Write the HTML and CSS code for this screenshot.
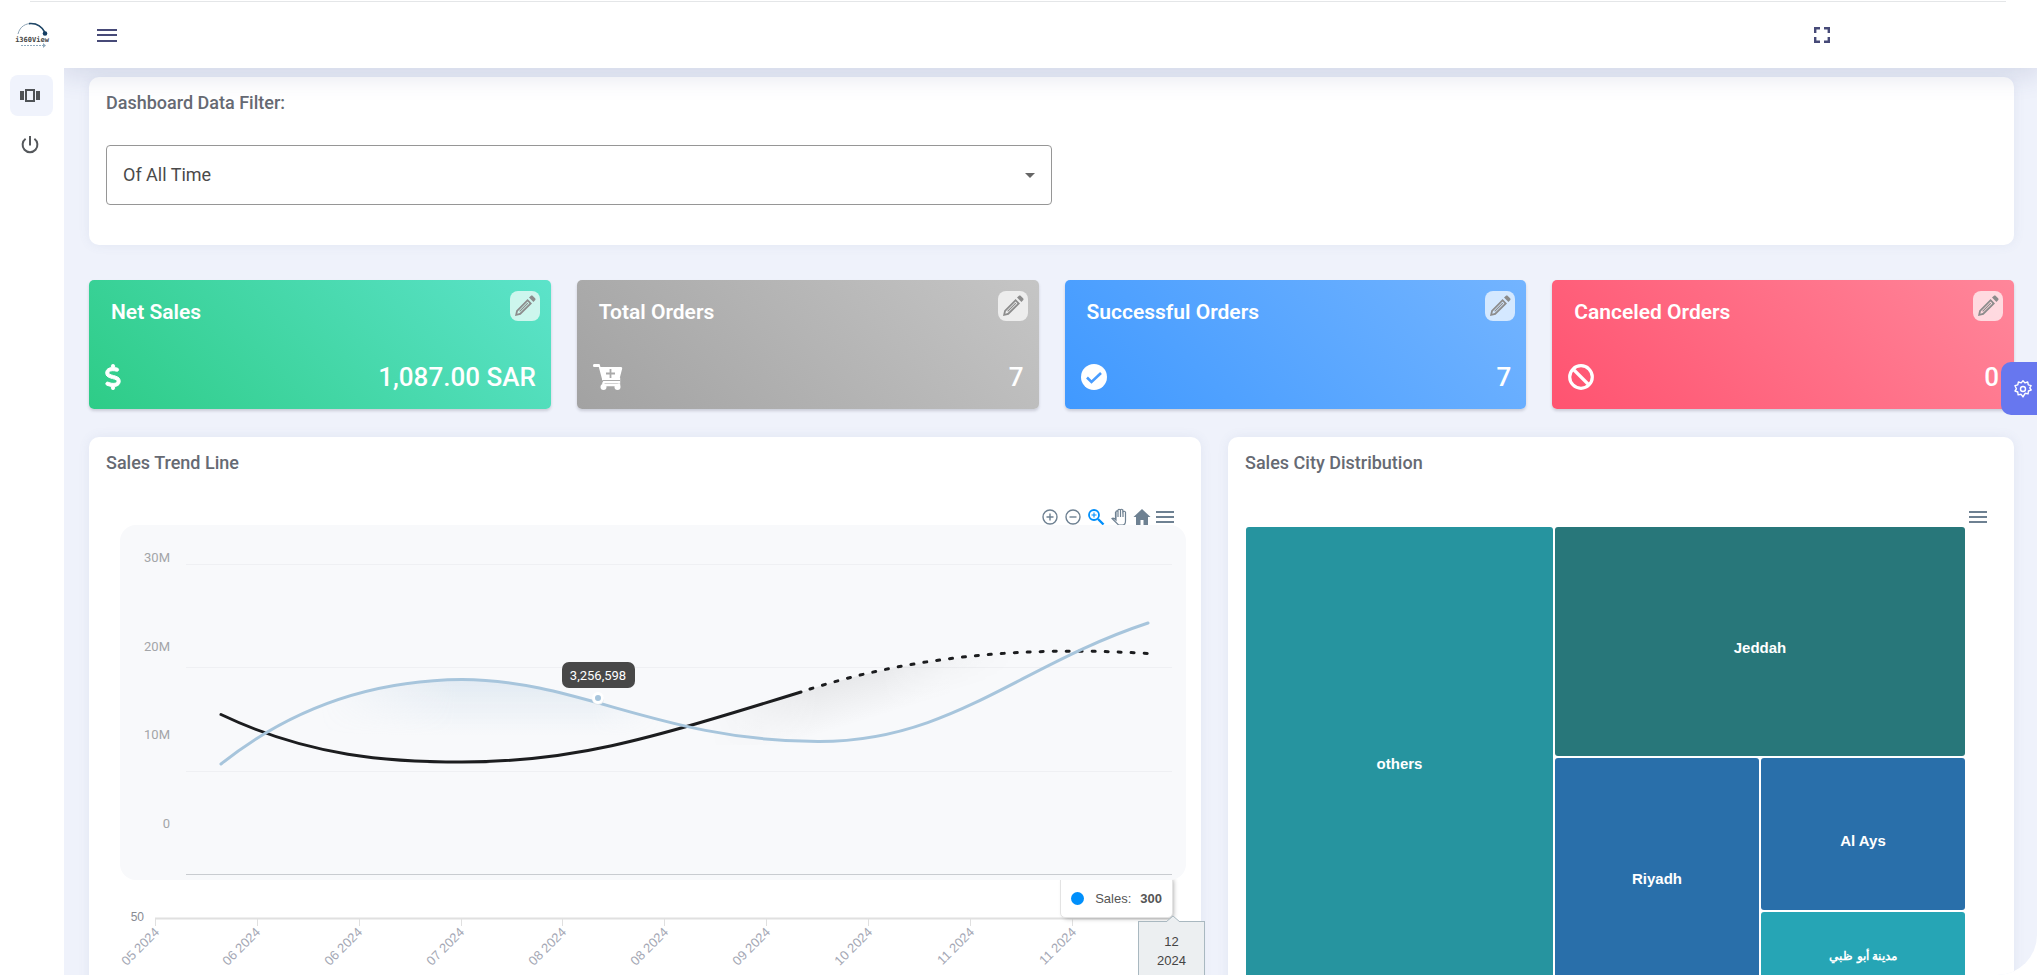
FILE: index.html
```html
<!DOCTYPE html>
<html lang="en">
<head>
<meta charset="utf-8">
<title>Dashboard</title>
<link rel="stylesheet" href="styles.css">
</head>
<body>
<svg class="defs" aria-hidden="true">
  <symbol id="pencil" viewBox="0 0 24 24"><path fill-rule="evenodd" d="M2 22l1.2-5.6L14.6 5l4.4 4.4L7.600 20.800zM4.900 17.300l-.6 2.400 2.400-.6 9.700-9.700-1.800-1.800zM7 17.800l-.8-.8 8.200-8.200.8.8zM16 3.600l1.700-1.700c.6-.6 1.500-.6 2.100 0l2.300 2.300c.6.6.6 1.500 0 2.100L20.400 8z"/></symbol>
  <symbol id="bars" viewBox="0 0 18 14"><path d="M0 1h18v2H0zM0 6h18v2H0zM0 11h18v2H0z"/></symbol>
</svg>
<div class="app">
  <aside class="sidebar">
    <a class="logo" href="#" aria-label="i360View">
      <svg viewBox="0 0 36 26" width="36" height="26">
        <path d="M3 12C5 4 11 1.500 16.500 1.500c6 0 11 3.500 13.500 9" fill="none" stroke="#8ca3b5" stroke-width="1"/>
        <path d="M14 1.600c7-.6 13 3 16 9" fill="none" stroke="#1f4666" stroke-width="1.600"/>
        <circle cx="30" cy="11.500" r="2.300" fill="#153e63"/>
        <path d="M6 23.500h22" stroke="#8fa9bd" stroke-dasharray="2 1"/>
        <path d="M28 21l3 2.500-3 2.500z" fill="#8fa9bd"/>
        <text x="17" y="20" class="logo-text">i360View</text>
      </svg>
    </a>
    <nav class="nav">
      <a class="nav-item active" href="#" aria-label="Dashboard">
        <svg viewBox="0 0 20 14" width="20" height="14"><path fill="#4f5256" fill-rule="evenodd" d="M0 2h4v9H0zM16 2h4v9h-4zM5 0h10v13H5zM7 2v9h6V2z"/></svg>
      </a>
      <a class="nav-item" href="#" aria-label="Log out">
        <svg viewBox="0 0 18 18" width="18" height="18" fill="none" stroke="#55585c" stroke-width="2"><path d="M9 0v9.500M4.600 2.800a7.400 7.400 0 1 0 8.800 0"/></svg>
      </a>
    </nav>
  </aside>
  <div class="page">
    <header class="header">
      <button class="icon-button" aria-label="Toggle menu"><svg viewBox="0 0 20 14" width="20" height="14" fill="#474a78"><path d="M0 1h20v2H0zM0 6h20v2H0zM0 12h20v2H0z"/></svg></button>
      <button class="icon-button" aria-label="Full screen"><svg viewBox="0 0 16 16" width="16" height="16" fill="none" stroke="#474a78" stroke-width="2.400"><path d="M1.200 6V1.200H6M10 1.200h4.800V6M14.800 10v4.800H10M6 14.800H1.200V10"/></svg></button>
    </header>
    <main class="main">
      <section class="card">
        <label class="card-title" for="period">Dashboard Data Filter:</label>
        <div class="select-wrap">
          <select id="period" class="select"><option>Of All Time</option></select>
          <svg class="caret" viewBox="0 0 10 5" width="10" height="5"><path d="M0 0h10L5 5z" fill="#666"/></svg>
        </div>
      </section>

      <section class="stats">
        <article class="stat green">
          <div class="stat-row"><h2 class="stat-title">Net Sales</h2><button class="edit" aria-label="Edit"><svg width="24" height="24"><use href="#pencil"/></svg></button></div>
          <div class="stat-row"><svg viewBox="0 0 320 512" width="16" height="26" fill="#fff" stroke="#fff" stroke-width="20"><path d="M160 0c17.700 0 32 14.300 32 32v35.700c1.600.2 3.100.4 4.700.7.400.1.700.1 1.100.2l48 8.800c17.400 3.200 28.900 19.900 25.700 37.200s-19.900 28.900-37.200 25.700l-47.500-8.700c-31.300-4.600-58.900-1.500-78.300 6.200s-27.200 18.300-29 28.100c-2 10.700-.5 16.700 1.200 20.400 1.800 3.900 5.500 8.300 12.800 13.200 16.300 10.700 41.300 17.700 73.700 26.300l2.900.8c28.600 7.600 63.600 16.800 89.600 33.800 14.200 9.300 27.600 21.900 35.900 39.500 8.500 17.900 10.300 37.900 6.400 59.200-6.900 38-33.100 63.400-65.600 76.700-13.700 5.600-28.600 9.200-44.400 11V480c0 17.700-14.300 32-32 32s-32-14.300-32-32v-34.900l-1.200-.2c-24.400-3.800-64.500-14.300-91.500-26.300-16.100-7.200-23.400-26.100-16.200-42.200s26.100-23.400 42.200-16.200c20.900 9.300 55.300 18.500 75.200 21.600 31.900 4.700 58.200 2 76-5.300 16.900-6.900 24.600-16.900 26.800-28.900 1.900-10.600.4-16.700-1.300-20.400-1.900-4-5.600-8.400-13-13.300-16.400-10.700-41.500-17.700-74-26.300l-2.800-.7c-28.700-7.600-63.700-16.900-89.700-33.900-14.200-9.300-27.500-22-35.800-39.600-8.400-17.900-10.100-37.900-6.100-59.200C23.700 116 52.300 91.200 84.800 78.300 98.100 73 112.800 69.300 128 67.200V32c0-17.700 14.300-32 32-32z"/></svg><span class="stat-value">1,087.00 SAR</span></div>
        </article>
        <article class="stat gray">
          <div class="stat-row"><h2 class="stat-title">Total Orders</h2><button class="edit" aria-label="Edit"><svg width="24" height="24"><use href="#pencil"/></svg></button></div>
          <div class="stat-row"><svg viewBox="0 0 30 26" width="30" height="26"><path d="M1 0h5.500l1 3H28q1.500 0 1.200 1.500L26.500 15H9L5.800 3H1Q0 3 0 1.500T1 0z" fill="#fff"/><path d="M9 15h17v3H11q-1 1-.5 3H26v-1.500" fill="none" stroke="#fff" stroke-width="2.400"/><path d="M10 16.500h17" stroke="#ababab"/><circle cx="10.500" cy="23" r="3" fill="#fff"/><circle cx="24.500" cy="23" r="3" fill="#fff"/><path d="M17.500 5v9M13 9.500h9" stroke="#aaa" stroke-width="1.800"/></svg><span class="stat-value">7</span></div>
        </article>
        <article class="stat blue">
          <div class="stat-row"><h2 class="stat-title">Successful Orders</h2><button class="edit" aria-label="Edit"><svg width="24" height="24"><use href="#pencil"/></svg></button></div>
          <div class="stat-row"><svg viewBox="0 0 26 26" width="26" height="26"><circle cx="13" cy="13" r="13" fill="#fff"/><path d="M6 13.500l4.500 4.500L20 9" fill="none" stroke="#489cff" stroke-width="2.600"/></svg><span class="stat-value">7</span></div>
        </article>
        <article class="stat red">
          <div class="stat-row"><h2 class="stat-title">Canceled Orders</h2><button class="edit" aria-label="Edit"><svg width="24" height="24"><use href="#pencil"/></svg></button></div>
          <div class="stat-row"><svg viewBox="0 0 26 26" width="26" height="26" fill="none" stroke="#fff" stroke-width="3.200"><circle cx="13" cy="13" r="11.300"/><path d="M5 5l16 16"/></svg><span class="stat-value">0</span></div>
        </article>
      </section>

      <section class="charts">
        <article class="card">
          <h2 class="card-title">Sales Trend Line</h2>
          <div class="toolbar">
            <button class="tool" aria-label="Zoom in"><svg viewBox="0 0 18 18" width="18" height="18" fill="none" stroke="#6e8192" stroke-width="1.400"><circle cx="9" cy="9" r="7"/><path d="M9 5.500v7M5.500 9h7"/></svg></button>
            <button class="tool" aria-label="Zoom out"><svg viewBox="0 0 18 18" width="18" height="18" fill="none" stroke="#6e8192" stroke-width="1.400"><circle cx="9" cy="9" r="7"/><path d="M5.500 9h7"/></svg></button>
            <button class="tool" aria-label="Selection zoom"><svg viewBox="0 0 18 18" width="18" height="18" fill="none" stroke="#008ffb"><circle cx="7" cy="7" r="5" stroke-width="1.800"/><path d="M11 11l5.500 5.500" stroke-width="2.400"/><path d="M7 4.500v5M4.500 7h5" stroke-width="1.100"/></svg></button>
            <button class="tool" aria-label="Pan"><svg viewBox="0 0 18 18" width="18" height="18" fill="none" stroke="#6e8192" stroke-width="1.200"><path d="M5.500 11V4M8 9V2M10.500 9V1.500M13 9V2.500M15.500 4v9q0 4-3 4H8.500L2 10.500q1.500-1.200 4 1.500V3.500q1-1.200 2 0V2q1-1.500 2.200 0 1.300-1.500 2.600 0v2q1.500-1.500 2.700 0"/></svg></button>
            <button class="tool" aria-label="Reset zoom"><svg viewBox="0 0 18 18" width="18" height="18" fill="#6e8192"><path d="M9 1l8.500 8H15v8h-4.500v-5h-3v5H3V9H.500z"/></svg></button>
            <button class="tool" aria-label="Menu"><svg width="18" height="14" fill="#6e8192"><use href="#bars"/></svg></button>
          </div>
          <svg class="trend" viewBox="0 0 1066 355" role="img" aria-label="Sales trend">
            <defs>
              <linearGradient id="blueFill" x1="0" y1="154" x2="0" y2="210" gradientUnits="userSpaceOnUse"><stop stop-color="#a5c3dc" stop-opacity=".26"/><stop offset="1" stop-color="#a5c3dc" stop-opacity="0"/></linearGradient>
              <linearGradient id="blackFill" x1="740" y1="140" x2="756" y2="192" gradientUnits="userSpaceOnUse"><stop stop-color="#222" stop-opacity=".09"/><stop offset="1" stop-color="#222" stop-opacity="0"/></linearGradient>
              <linearGradient id="fade" x1="200" x2="540" gradientUnits="userSpaceOnUse"><stop stop-color="#000"/><stop offset=".4" stop-color="#fff"/><stop offset=".8" stop-color="#fff"/><stop offset="1" stop-color="#000"/></linearGradient>
              <linearGradient id="fade2" x1="590" x2="900" gradientUnits="userSpaceOnUse"><stop stop-color="#000"/><stop offset=".35" stop-color="#fff"/><stop offset=".55" stop-color="#fff"/><stop offset="1" stop-color="#000"/></linearGradient>
              <mask id="m1"><rect width="1066" height="355" fill="url(#fade)"/></mask>
              <mask id="m2"><rect width="1066" height="355" fill="url(#fade2)"/></mask>
            </defs>
            <rect width="1066" height="355" rx="16" fill="#f8f9fb"/>
            <path d="M66 39.500h986M66 142.500h986M66 246.500h986" stroke="#eff0f3"/>
            <path d="M66 349.500h986" stroke="#c9ccd0"/>
            <g class="axis-text" text-anchor="end"><text x="50" y="37">30M</text><text x="50" y="126">20M</text><text x="50" y="214">10M</text><text x="50" y="303">0</text></g>
            <path mask="url(#m1)" d="M101 239C190 168 280 155 342 154.500C460 155 540 216 698 216.500z" fill="url(#blueFill)"/>
            <path mask="url(#m2)" d="M575 201L681 167C790 132 905 121 1028 128.500L960 220H575z" fill="url(#blackFill)"/>
            <g fill="none" stroke-width="3" stroke-linecap="round">
              <path d="M101 189.500C190 232 270 237 342 237C450 237 520 217 681 167" stroke="#1c1d1f"/>
              <path d="M690 164C795 131 905 121 1028 128.500" stroke="#1c1d1f" stroke-dasharray="3 10"/>
              <path d="M101 239C190 168 280 155 342 154.500C460 155 540 216 698 216.500C830 217 900 140 1028 98" stroke="#a7c5dc"/>
            </g>
            <circle cx="478" cy="174" r="6" fill="#dfe6ec"/><circle cx="478" cy="173" r="4.500" fill="#a7c5dc" stroke="#fff" stroke-width="3"/>
            <rect x="442" y="137" width="73" height="26" rx="7" fill="#484848"/>
            <text x="478" y="155" text-anchor="middle" class="point-text">3,256,598</text>
          </svg>
          <div class="axis">
            <svg class="axis-svg" viewBox="0 0 1112 120" role="img" aria-label="Months">
              <path d="M66 38.500h1018" stroke="#e0e0e0" stroke-width="2"/>
              <path d="M66.500 39v7M168.500 39v7M270.500 39v7M372.500 39v7M473.500 39v7M575.500 39v7M677.500 39v7M779.500 39v7M881.500 39v7M983.500 39v7" stroke="#e0e0e0"/>
              <text x="55" y="41" class="axis-label" text-anchor="end">50</text>
              <g class="months" text-anchor="end">
                <text transform="translate(71 53) rotate(-45)">05 2024</text>
                <text transform="translate(172 53) rotate(-45)">06 2024</text>
                <text transform="translate(274 53) rotate(-45)">06 2024</text>
                <text transform="translate(376 53) rotate(-45)">07 2024</text>
                <text transform="translate(478 53) rotate(-45)">08 2024</text>
                <text transform="translate(580 53) rotate(-45)">08 2024</text>
                <text transform="translate(682 53) rotate(-45)">09 2024</text>
                <text transform="translate(784 53) rotate(-45)">10 2024</text>
                <text transform="translate(886 53) rotate(-45)">11 2024</text>
                <text transform="translate(988 53) rotate(-45)">11 2024</text>
              </g>
            </svg>
            <div class="tip"><span class="dot"></span><span>Sales:</span><b>300</b></div>
            <div class="x-tip"><svg class="x-arrow" viewBox="0 0 14 7" width="14" height="7"><path d="M0 7l7-6 7 6" fill="#eceff1" stroke="#a9b8c0"/></svg>12<br>2024</div>
          </div>
        </article>

        <article class="card">
          <h2 class="card-title">Sales City Distribution</h2>
          <div class="toolbar"><button class="tool" aria-label="Menu"><svg width="18" height="14" fill="#6e8192"><use href="#bars"/></svg></button></div>
          <div class="treemap">
            <div class="cell others">others</div>
            <div class="cell jeddah">Jeddah</div>
            <div class="cell riyadh">Riyadh</div>
            <div class="cell ays">Al Ays</div>
            <div class="cell dhabi" lang="ar" dir="rtl">مدينة أبو ظبي</div>
          </div>
        </article>
      </section>
    </main>
  </div>
  <button class="settings" aria-label="Settings">
    <svg viewBox="0 0 18 18" width="18" height="18" fill="none" stroke="#fff" stroke-width="1.400" stroke-linejoin="round"><path d="M9 .8l1.900 2.100 2.800-.9.600 2.900 2.800.8-1.300 2.100 1.400 2.200-2.800 1-.3 2.900-3-.6L9 16.900l-1.900-2.600-3 .6-.3-2.900-2.800-1 1.400-2.200L1 5.700l2.800-.8.600-2.900 2.800.9z"/><circle cx="9" cy="9" r="2.500"/></svg>
  </button>
</div>
</body>
</html>
```
FILE: styles.css
```css
* { box-sizing: border-box; }
body { margin: 0; background: #fff; color: #5f6470; font-family: Roboto, sans-serif; }
button { padding: 0; border: 0; background: none; font: inherit; cursor: pointer; }
svg { display: block; }
h2 { margin: 0; }
.defs { position: absolute; width: 0; height: 0; }

.app { display: flex; height: 100vh; overflow: hidden; }
.app::before { content: ""; position: absolute; z-index: 4; top: 1px; left: 30px; right: 31px; height: 1px; background: #e4e6e8; }

.sidebar { position: relative; z-index: 3; flex: none; width: 64px; padding: 22px 10px 0; background: #fff; }
.logo { display: block; padding-left: 5px; }
.logo-text { font: 700 7px "DejaVu Sans Mono", monospace; fill: #444; text-anchor: middle; }
.nav { display: flex; flex-direction: column; gap: 8px; margin-top: 27px; }
.nav-item { display: flex; align-items: center; justify-content: center; width: 43px; height: 41px; padding-right: 3px; border-radius: 8px; }
.nav-item.active { background: #f0f3fc; }

.page { display: flex; flex: 1; flex-direction: column; min-width: 0; }
.header { position: relative; z-index: 2; display: flex; flex: none; align-items: center; justify-content: space-between; height: 68px; padding: 2px 207px 0 33px; background: #fff; box-shadow: 0 4px 24px 4px rgba(60, 70, 130, .14); }

.main { flex: 1; min-height: 0; overflow: hidden; padding: 9px 23px 0 25px; background: #eff2fb; border-bottom-right-radius: 40px; }
.card { padding: 16px 17px; background: #fff; border-radius: 10px; box-shadow: 0 0 12px rgba(90, 110, 150, .09); }
.card-title { display: block; font-size: 18px; font-weight: 500; line-height: 20px; color: #666a73; }

.select-wrap { position: relative; width: 50%; margin: 32px 0 24px; }
.select { display: block; width: 100%; height: 60px; padding: 0 16px 2px; appearance: none; border: 1px solid #969696; border-radius: 4px; background: #fff; color: #4a4a4a; font: 400 18px Roboto, sans-serif; }
.caret { position: absolute; right: 17px; top: 28px; }

.stats { display: grid; grid-template-columns: repeat(4, 1fr); gap: 26px; margin-top: 35px; }
.stat { display: flex; flex-direction: column; justify-content: space-between; height: 129px; padding: 11px 11px 19px 16px; border-radius: 5px; box-shadow: 0 2px 3px rgba(60, 60, 80, .2); color: #fff; }
.green { background: linear-gradient(45deg, #2ecc87, #5ce3ca); }
.gray { background: linear-gradient(45deg, #a2a2a2, #c5c5c5); }
.blue { background: linear-gradient(45deg, #4099ff, #73b4ff); }
.red { background: linear-gradient(45deg, #ff5370, #ff869a); }
.stat-row { display: flex; align-items: center; justify-content: space-between; }
.stat-title { padding: 12px 0 0 6px; font-size: 21px; font-weight: 600; line-height: 18px; }
.stat-value { padding-right: 4px; font-size: 26px; font-weight: 500; line-height: 26px; }
.edit { display: grid; place-items: center; width: 30px; height: 30px; border-radius: 8px; background: rgba(255, 255, 255, .7); fill: #8c8c8c; }

.charts { display: grid; grid-template-columns: 1112fr 786fr; gap: 27px; margin-top: 28px; }
.toolbar { display: flex; align-items: center; justify-content: flex-end; gap: 5px; height: 17px; margin-top: 35px; padding-right: 10px; }
.trend { position: relative; z-index: 1; width: calc(100% - 12px); height: auto; margin-left: 14px; }
.axis-text { font-size: 13px; fill: #a3a5a8; }
.point-text { font-size: 13px; fill: #fff; }

.axis { position: relative; margin: 0 -17px; font: 13px "Liberation Sans", Arial, sans-serif; }
.axis-svg { width: 100%; height: auto; }
.axis-label { font-size: 12px; fill: #888b93; }
.months { font-size: 13px; fill: #a5a8b5; }
.tip { position: absolute; top: -5px; right: 28px; display: flex; align-items: center; gap: 9px; height: 43px; padding: 3px 10px 0; border: 1px solid #e3e3e3; border-radius: 5px; background: #fff; box-shadow: 2px 2px 5px -2px #999; color: #555; }
.dot { width: 13px; height: 13px; margin-right: 2px; border-radius: 50%; background: #008ffb; }
.x-tip { position: absolute; top: 41px; right: -4px; width: 67px; padding: 10px 0; border: 1px solid #a9b8c0; background: #eceff1; color: #444; line-height: 19px; text-align: center; }
.x-arrow { position: absolute; top: -7px; left: 27px; }

.treemap { display: grid; grid-template-columns: 307fr 204fr 204fr; grid-template-rows: 229px 152px 87px; gap: 2px; margin: 2px 32px 0 1px; }
.cell { display: grid; place-items: center; border-radius: 3px; color: #fff; font: 700 15px "Liberation Sans", Arial, sans-serif; }
.others { grid-row: 1 / 4; background: #26949f; }
.jeddah { grid-column: 2 / 4; padding-top: 12px; background: #28777a; }
.riyadh { grid-row: 2 / 4; grid-column: 2; background: #296faa; }
.ays { padding-top: 12px; background: #296faa; }
.dhabi { background: #26a5b5; font-size: 12px; }

.settings { position: absolute; z-index: 5; right: 0; top: 362px; display: flex; align-items: center; width: 36px; height: 53px; padding-left: 13px; border-radius: 10px 0 0 10px; background: #6777ef; }
```
